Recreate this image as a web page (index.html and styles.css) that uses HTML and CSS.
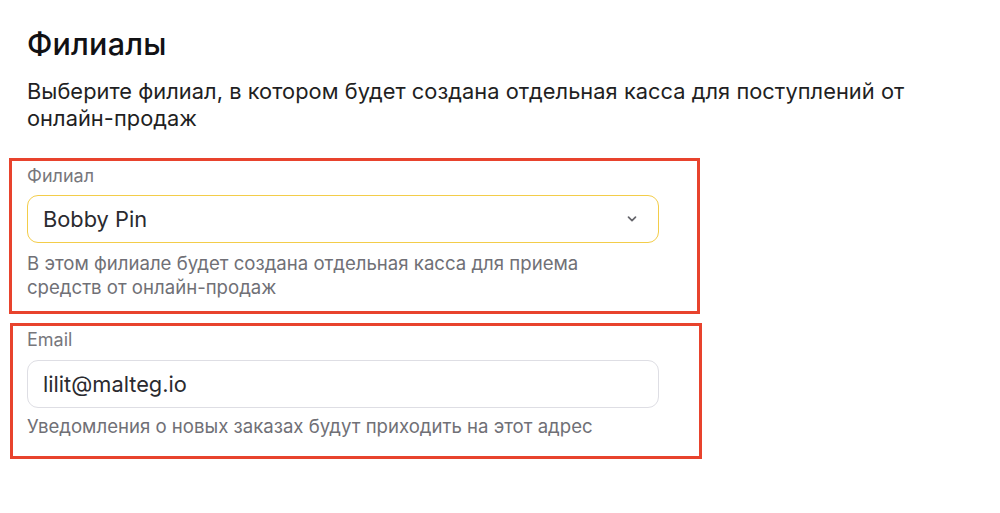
FILE: index.html
```html
<!DOCTYPE html>
<html lang="ru">
<head>
<meta charset="utf-8">
<link rel="stylesheet" href="styles.css">
</head>
<body>
<main class="page">
  <h1 class="title">Филиалы</h1>
  <p class="lead">Выберите филиал, в котором будет создана отдельная касса для поступлений от онлайн-продаж</p>

  <section class="field field--first">
    <div class="label">Филиал</div>
    <div class="control control--select">
      <span class="value">Bobby Pin</span>
      <svg class="chevron" width="12" height="8" viewBox="0 0 12 8" aria-hidden="true"><path d="M2.5 2.2l3.5 3.5 3.5-3.5" fill="none" stroke="#66666c" stroke-width="1.7" stroke-linecap="round" stroke-linejoin="round"/></svg>
    </div>
    <p class="hint">В этом филиале будет создана отдельная касса для приема<br>средств от онлайн-продаж</p>
  </section>

  <section class="field field--second">
    <div class="label">Email</div>
    <div class="control">
      <span class="value">lilit@malteg.io</span>
    </div>
    <p class="hint">Уведомления о новых заказах будут приходить на этот адрес</p>
  </section>
</main>
</body>
</html>
```

FILE: styles.css
```css
* { box-sizing: border-box; }
html, body { margin: 0; padding: 0; background: #fff; }
body {
  font-family: Inter, "Noto Sans", "Liberation Sans", sans-serif;
  color: #1b1b1f;
}
.page {
  padding: 26px 0 0 9px;
  width: 1000px;
}
.title {
  margin: 0 0 0 18px;
  font-size: 30.5px;
  line-height: 36px;
  font-weight: 500;
  color: #111114;
  letter-spacing: 0.2px;
}
.lead {
  margin: 16px 0 0 18px;
  width: 910px;
  font-size: 21.8px;
  line-height: 27px;
  color: #1f1f23;
  letter-spacing: 0.05px;
}
.field {
  border: 3px solid #e8432d;
}
.field--first {
  margin-top: 26px;
  width: 691px;
  padding: 4px 15px 12px;
}
.field--second {
  margin-top: 9px;
  margin-left: 1px;
  width: 692px;
  padding: 3px 14px 18px;
}
.label {
  font-size: 18px;
  line-height: 22px;
  color: #77777c;
}
.control {
  margin-top: 8px;
  height: 48px;
  width: 632px;
  border: 1.5px solid #dedee4;
  border-radius: 11px;
  display: flex;
  align-items: center;
  justify-content: space-between;
  padding: 0 20px 0 15px;
}
.field--second .control { margin-top: 9px; }
.control--select { border-color: #f3cd4a; }
.value {
  font-size: 21.8px;
  color: #2a2a2f;
}
.chevron { display: block; }
.hint {
  margin: 8px 0 0;
  font-size: 18.6px;
  line-height: 24px;
  color: #707076;
}
.field--second .hint { margin-top: 6px; }
```
